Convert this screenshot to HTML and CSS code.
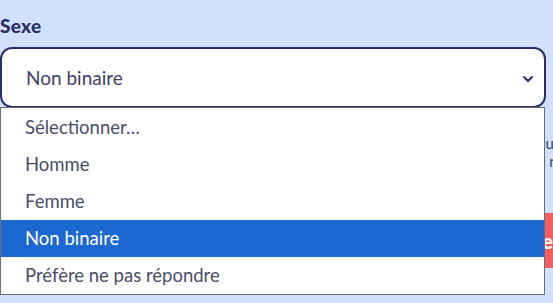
FILE: index.html
```html
<!DOCTYPE html>
<html>
<head>
    <title>Profil</title>
    <link rel="stylesheet" href="styles.css">
</head>
<body>
    <div class="page">
        <div class="form">
            <label class="label" for="sexe">Sexe</label>
            <div class="field">
                <div class="select" id="sexe">
                    <span>Non binaire</span>
                    <svg class="chevron" width="12" height="8" viewBox="0 0 12 8"><path d="M2 2l4 4 4-4" fill="none" stroke="#2b2d6b" stroke-width="2" stroke-linecap="round" stroke-linejoin="round"/></svg>
                </div>

                <div class="behind">
                    <p class="hint">Ces informations restent confidentielles et nous aident à partir du</p>
                    <p class="hint hint-long">profil pour mieux adapter les contenus que nous proposons à nos réseaux</p>
                    <button class="btn">Valider ma fiche</button>
                </div>

                <ul class="options">
                    <li>Sélectionner…</li>
                    <li>Homme</li>
                    <li>Femme</li>
                    <li class="active">Non binaire</li>
                    <li>Préfère ne pas répondre</li>
                </ul>
            </div>
        </div>
    </div>
</body>
</html>
```

FILE: styles.css
```css
body {
    margin: 0;
    background-color: #cfe1fc;
    font-family: "Lato", "Open Sans", sans-serif;
}

.page {
    width: 553px;
    height: 303px;
    overflow: hidden;
}

.form {
    padding-top: 15px;
    width: 700px;
}

.label {
    display: block;
    font-size: 19px;
    font-weight: 900;
    color: #2b2d6b;
    margin-bottom: 10px;
    line-height: 22px;
    letter-spacing: 0.3px;
}

.field {
    position: relative;
    width: 546px;
}

.select {
    box-sizing: border-box;
    height: 61px;
    display: flex;
    align-items: center;
    justify-content: space-between;
    padding: 0 10px 0 24px;
    background: white;
    border: 2px solid #2b2d6b;
    border-radius: 12px;
    font-size: 19px;
    color: #3f4266;
}

.chevron {
    margin-top: 2px;
}

.behind {
    width: 700px;
    padding-top: 26px;
}

.hint {
    margin: 0;
    font-size: 15px;
    line-height: 18px;
    color: #3f4266;
    width: 554px;
    text-align: right;
    white-space: nowrap;
}

.hint-long {
    width: 600px;
}

.btn {
    display: block;
    margin-top: 43px;
    margin-left: 380px;
    height: 55px;
    padding: 0 30px;
    border: none;
    border-radius: 8px;
    background: #f45b62;
    color: white;
    font-family: inherit;
    font-weight: 900;
    font-size: 20px;
}

.options {
    position: absolute;
    top: 60px;
    left: 0;
    width: 545px;
    box-sizing: border-box;
    margin: 0;
    padding: 1px 0 0;
    list-style: none;
    background: white;
    border: 1px solid #6d6d75;
    font-size: 18.5px;
    color: #4a4c6a;
}

.options li {
    height: 37px;
    line-height: 37px;
    padding-left: 24px;
}

.options li.active {
    background: #1c68d1;
    color: white;
}
```
